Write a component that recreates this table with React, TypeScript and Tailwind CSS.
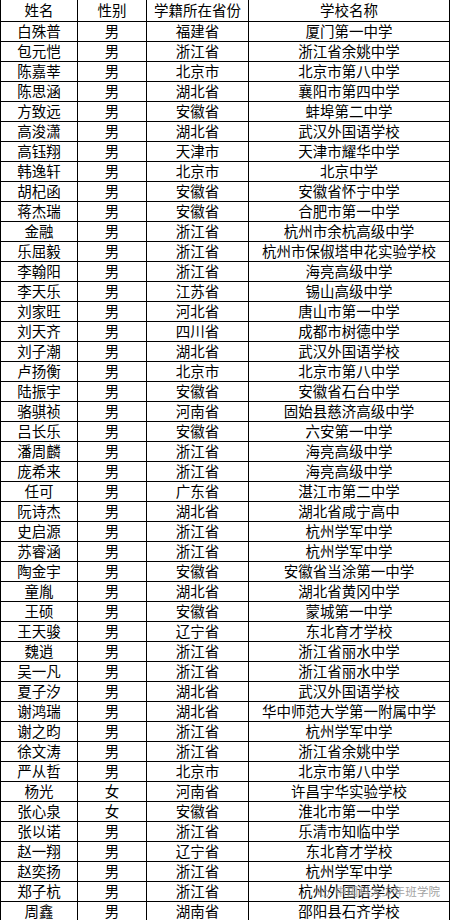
const rows: [string, string, string, string][] = [
  ["白殊普", "男", "福建省", "厦门第一中学"],
  ["包元恺", "男", "浙江省", "浙江省余姚中学"],
  ["陈嘉莘", "男", "北京市", "北京市第八中学"],
  ["陈思涵", "男", "湖北省", "襄阳市第四中学"],
  ["方致远", "男", "安徽省", "蚌埠第二中学"],
  ["高浚潇", "男", "湖北省", "武汉外国语学校"],
  ["高钰翔", "男", "天津市", "天津市耀华中学"],
  ["韩逸轩", "男", "北京市", "北京中学"],
  ["胡杞函", "男", "安徽省", "安徽省怀宁中学"],
  ["蒋杰瑞", "男", "安徽省", "合肥市第一中学"],
  ["金融", "男", "浙江省", "杭州市余杭高级中学"],
  ["乐屈毅", "男", "浙江省", "杭州市保俶塔申花实验学校"],
  ["李翰阳", "男", "浙江省", "海亮高级中学"],
  ["李天乐", "男", "江苏省", "锡山高级中学"],
  ["刘家旺", "男", "河北省", "唐山市第一中学"],
  ["刘天齐", "男", "四川省", "成都市树德中学"],
  ["刘子潮", "男", "湖北省", "武汉外国语学校"],
  ["卢扬衡", "男", "北京市", "北京市第八中学"],
  ["陆振宇", "男", "安徽省", "安徽省石台中学"],
  ["骆骐祯", "男", "河南省", "固始县慈济高级中学"],
  ["吕长乐", "男", "安徽省", "六安第一中学"],
  ["潘周麟", "男", "浙江省", "海亮高级中学"],
  ["庞希来", "男", "浙江省", "海亮高级中学"],
  ["任可", "男", "广东省", "湛江市第二中学"],
  ["阮诗杰", "男", "湖北省", "湖北省咸宁高中"],
  ["史启源", "男", "浙江省", "杭州学军中学"],
  ["苏睿涵", "男", "浙江省", "杭州学军中学"],
  ["陶金宇", "男", "安徽省", "安徽省当涂第一中学"],
  ["童胤", "男", "湖北省", "湖北省黄冈中学"],
  ["王硕", "男", "安徽省", "蒙城第一中学"],
  ["王天骏", "男", "辽宁省", "东北育才学校"],
  ["魏逍", "男", "浙江省", "浙江省丽水中学"],
  ["吴一凡", "男", "浙江省", "浙江省丽水中学"],
  ["夏子汐", "男", "湖北省", "武汉外国语学校"],
  ["谢鸿瑞", "男", "湖北省", "华中师范大学第一附属中学"],
  ["谢之昀", "男", "浙江省", "杭州学军中学"],
  ["徐文涛", "男", "浙江省", "浙江省余姚中学"],
  ["严从哲", "男", "北京市", "北京市第八中学"],
  ["杨光", "女", "河南省", "许昌宇华实验学校"],
  ["张心泉", "女", "安徽省", "淮北市第一中学"],
  ["张以诺", "男", "浙江省", "乐清市知临中学"],
  ["赵一翔", "男", "辽宁省", "东北育才学校"],
  ["赵奕扬", "男", "浙江省", "杭州学军中学"],
  ["郑子杭", "男", "浙江省", "杭州外国语学校"],
  ["周鑫", "男", "湖南省", "邵阳县石齐学校"],
];

function Row({ cells, header }: { cells: string[]; header?: boolean }) {
  return (
    <div
      className={`grid grid-cols-[77px_69px_102px_201px] border-b border-black ${
        header ? "h-[22px]" : "h-[20px]"
      }`}
    >
      {cells.map((c, i) => (
        <div key={i} className="flex items-center justify-center border-r border-black whitespace-nowrap">
          {c}
        </div>
      ))}
    </div>
  );
}

function WechatMark() {
  return (
    <svg width="14" height="12" viewBox="0 0 14 12" fill="none" stroke="#9a9a9a" strokeWidth="1">
      <path d="M5.5 1C2.9 1 1 2.6 1 4.6c0 1.1.6 2 1.5 2.7L2.1 8.6l1.6-.8c.5.2 1.1.3 1.8.3" />
      <path d="M9 4.2c-2.3 0-4 1.4-4 3.1s1.7 3.1 4 3.1c.5 0 .9-.1 1.3-.2l1.3.7-.3-1.1c.8-.6 1.4-1.5 1.4-2.5 0-1.7-1.6-3.1-3.7-3.1z" />
    </svg>
  );
}

export default function App() {
  return (
    <div
      className="relative h-[920px] w-[451px] overflow-hidden bg-white text-[14.5px] leading-none text-black"
      style={{ fontFamily: '"Noto Sans CJK SC", "Noto Sans", sans-serif' }}
    >
      <div className="w-[450px] border-l border-black">
        <Row header cells={["姓名", "性别", "学籍所在省份", "学校名称"]} />
        {rows.map((r, i) => (
          <Row key={i} cells={r} />
        ))}
      </div>
      <div className="absolute left-[316px] top-[886px] flex items-center gap-[5px] opacity-80">
        <WechatMark />
        <span className="text-[11.5px] tracking-[0.2px] text-[#8c8c8c] [text-shadow:0_0_2px_#fff]">
          中国科大少年班学院
        </span>
      </div>
    </div>
  );
}
